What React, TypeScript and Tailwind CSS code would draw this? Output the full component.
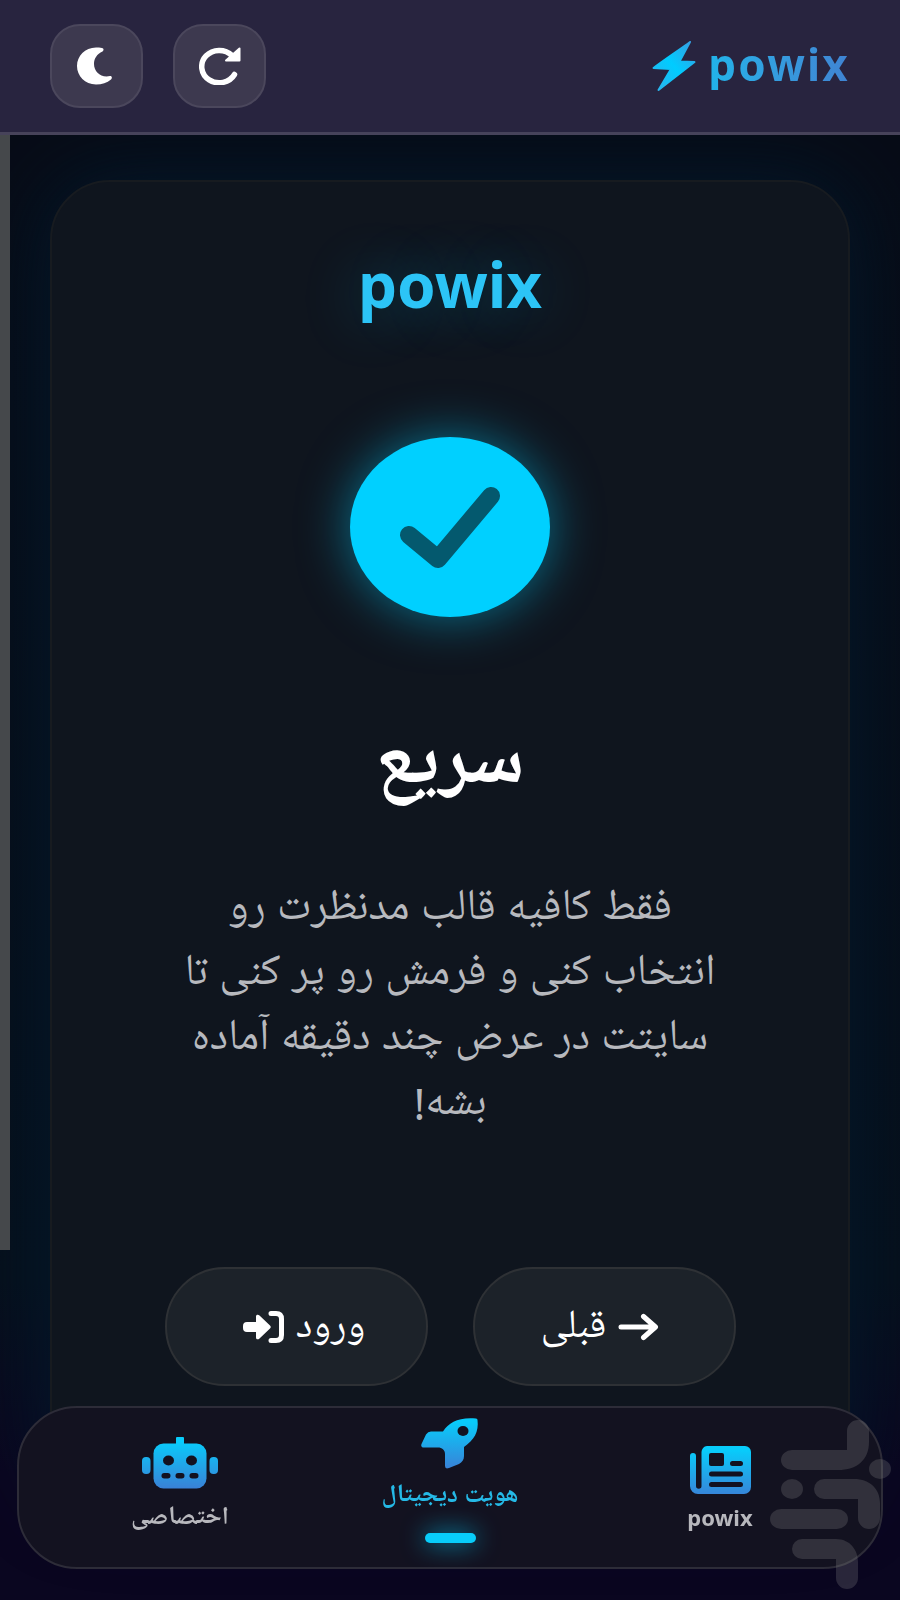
import { useState } from "react";

const tabs = [
  { id: "home", label: "powix", Icon: NewspaperIcon, text: "text-[22px]" },
  { id: "identity", label: "هویت دیجیتال", Icon: RocketIcon, text: "text-[25px]" },
  { id: "custom", label: "اختصاصی", Icon: RobotIcon, text: "text-[25px]" },
];

export default function App() {
  const [active, setActive] = useState("identity");

  return (
    <div
      dir="rtl"
      className="min-h-screen overflow-hidden bg-linear-to-b from-[#070c17] from-10% via-[#06101c] via-80% to-[#0a0620] to-92% font-['Noto_Sans','Noto_Naskh_Arabic_UI','Noto_Naskh_Arabic','DejaVu_Sans',sans-serif] text-white"
    >
      <header className="relative z-10 flex h-[135px] items-center justify-between border-b-3 border-[#47435a] bg-[#28243f] px-[50px]">
        <a href="#" dir="ltr" className="flex items-center gap-3">
          <BoltLogo />
          <span className="bg-linear-to-r from-[#20b4ea] to-[#3f83d2] bg-clip-text pb-1 text-[44px] font-bold leading-none tracking-wider text-transparent">
            powix
          </span>
        </a>
        <div className="flex gap-[30px]">
          <HeaderButton label="بارگذاری مجدد">
            <RedoIcon />
          </HeaderButton>
          <HeaderButton label="حالت شب">
            <MoonIcon />
          </HeaderButton>
        </div>
      </header>

      <main className="px-[50px] pt-[45px]">
        <section className="flex flex-col items-center rounded-[60px] border-2 border-[#171b20] bg-[#0f151e] px-[100px] pb-28 pt-[62px] shadow-[0_0_80px_#03192c]">
          <h1 className="text-[62px] font-bold leading-[80px] text-[#2cc4f6] [text-shadow:0_0_60px_rgba(0,210,255,0.3)]">
            powix
          </h1>

          <div className="mt-[113px] flex h-[180px] w-[200px] items-center justify-center rounded-[50%] bg-[#00d0ff] shadow-[0_0_50px_rgba(0,210,255,0.5)]">
            <svg viewBox="0 0 102 84" className="h-[84px] w-[102px]" fill="none" aria-hidden="true">
              <path
                d="M10 50 L39 74 L92 11"
                stroke="#04596e"
                strokeWidth="18"
                strokeLinecap="round"
                strokeLinejoin="round"
              />
            </svg>
          </div>

          <h2 className="mt-[106px] text-[78px] font-bold leading-[80px]">سریع</h2>

          <p className="mt-[73px] text-center text-[44px] leading-[65px] text-[#b7b9be]">
            فقط کافیه قالب مدنظرت رو
            <br />
            انتخاب کنی و فرمش رو پر کنی تا
            <br />
            سایتت در عرض چند دقیقه آماده
            <br />
            بشه!
          </p>

          <div className="mt-[131px] flex gap-[45px]">
            <PillButton className="pl-0 pr-2">
              <ArrowIcon />
              قبلی
            </PillButton>
            <PillButton className="pl-4 pr-0">
              ورود
              <LoginIcon />
            </PillButton>
          </div>
        </section>
      </main>

      {/* scroll indicator */}
      <div className="fixed bottom-[350px] left-0 top-[135px] w-[10px] bg-[#45484b]" />

      <nav className="fixed inset-x-[17px] bottom-[31px] z-10 flex h-[163px] rounded-[60px] border-2 border-[#2d2c38] bg-[#131220] px-[26px]">
        {tabs.map(({ id, label, Icon, text }) => {
          const isActive = id === active;
          return (
            <button
              key={id}
              type="button"
              onClick={() => setActive(id)}
              className={`flex flex-1 flex-col items-center ${isActive ? "pt-[7px]" : "pt-[29px]"}`}
            >
              <Icon />
              <span
                className={`mt-[6px] whitespace-nowrap font-bold leading-8 ${text} ${
                  isActive ? "text-[#25b9e6]" : "text-[#b8b8bd]"
                }`}
              >
                {label}
              </span>
              {isActive && (
                <span className="mt-[22px] h-[10px] w-[51px] rounded-full bg-[#08cdfa] shadow-[0_0_24px_rgba(0,210,255,0.8)]" />
              )}
            </button>
          );
        })}
      </nav>

      <Watermark />

      <svg width="0" height="0" className="absolute" aria-hidden="true">
        <defs>
          <linearGradient id="tab-gradient" gradientUnits="userSpaceOnUse" x1="0" y1="4" x2="0" y2="52">
            <stop offset="0" stopColor="#08ccfb" />
            <stop offset="1" stopColor="#3a80d6" />
          </linearGradient>
        </defs>
      </svg>
    </div>
  );
}

function HeaderButton({ label, children }: { label: string; children: React.ReactNode }) {
  return (
    <button
      type="button"
      aria-label={label}
      className="flex h-[84px] w-[93px] items-center justify-center rounded-[30px] border-2 border-[#4b475c] bg-[#3d394f]"
    >
      {children}
    </button>
  );
}

function PillButton({ className, children }: { className: string; children: React.ReactNode }) {
  return (
    <button
      type="button"
      className={`flex h-[119px] w-[263px] items-center justify-center gap-3 rounded-full border-2 border-[#2e3135] bg-[#1c2229] text-[40px] ${className}`}
    >
      {children}
    </button>
  );
}

function BoltLogo() {
  return (
    <svg viewBox="0 0 44 52" className="h-[52px] w-11" aria-hidden="true">
      <defs>
        <linearGradient id="bolt-gradient" x1="0" y1="1" x2="1" y2="0">
          <stop offset="0" stopColor="#2fb0ea" />
          <stop offset="0.5" stopColor="#00ccff" />
          <stop offset="1" stopColor="#3a9be0" />
        </linearGradient>
      </defs>
      <path
        d="M38 2C30 8 12 20 1.500 28L19 29L6.500 50L42.500 22L27.500 21.500Z"
        fill="url(#bolt-gradient)"
        stroke="url(#bolt-gradient)"
        strokeWidth="2"
        strokeLinejoin="round"
      />
    </svg>
  );
}

function MoonIcon() {
  return (
    <svg viewBox="0 0 41 38" className="h-[38px] w-[41px] fill-white" aria-hidden="true">
      <path d="M26 1C28 1.500 28 3.500 26.500 4.500C21 7 18 11.500 18 17C18 25 25 31 34 29C36 29 36.500 31 35 32.500C31 36 26 37.500 20 37.500C9 37.500 1 29 1 19C1 9 9 0.500 20 0.500C22 0.500 24 0.500 26 1Z" />
    </svg>
  );
}

function RedoIcon() {
  return (
    <svg viewBox="0 0 42 38" className="h-[38px] w-[42px]" fill="none" aria-hidden="true">
      <path d="M35.500 27.500A17.500 16.200 0 1 1 33 8.500" stroke="white" strokeWidth="5.500" strokeLinecap="round" />
      <path d="M40.500 1.500V13.500H27Z" fill="white" stroke="white" strokeWidth="2" strokeLinejoin="round" />
    </svg>
  );
}

function ArrowIcon() {
  return (
    <svg viewBox="0 0 41 28" className="h-7 w-[41px]" fill="none" aria-hidden="true">
      <path
        d="M3 14H36M25.500 3.500L37.500 14L25.500 24.500"
        stroke="white"
        strokeWidth="5"
        strokeLinecap="round"
        strokeLinejoin="round"
      />
    </svg>
  );
}

function LoginIcon() {
  return (
    <svg viewBox="0 0 41 32" className="h-8 w-[41px]" fill="none" aria-hidden="true">
      <path
        d="M4 11H13V5.500C13 3.500 15 3 16.500 4.500L27 14.500Q28.500 16 27 17.500L16.500 27.500C15 29 13 28.500 13 26.500V21H4Q0 21 0 17V15Q0 11 4 11Z"
        fill="white"
      />
      <path
        d="M28 2.500H33Q38.500 2.500 38.500 8V24Q38.500 29.500 33 29.500H28"
        stroke="white"
        strokeWidth="5"
        strokeLinecap="round"
      />
    </svg>
  );
}

function NewspaperIcon() {
  return (
    <svg viewBox="0 -9 61 58" className="h-[58px] w-[61px]" fill="none" aria-hidden="true">
      <path
        d="M17 0H55a6 6 0 0 1 6 6V41a7 7 0 0 1-7 7H8a8 8 0 0 1-8-8V10a3 3 0 0 1 6 0V40a2.750 2.750 0 0 0 5.500 0V6a6 6 0 0 1 5.500-6Z"
        fill="url(#tab-gradient)"
      />
      <rect x="19" y="7" width="15" height="13" rx="2" fill="#131220" />
      <path d="M42.500 17.500H50.500M21.500 28H50.500M21.500 38.500H50.500" stroke="#131220" strokeWidth="5" strokeLinecap="round" />
    </svg>
  );
}

function RocketIcon() {
  return (
    <svg viewBox="0 -3 58 58" className="size-[58px]" fill="none" aria-hidden="true">
      <path
        d="M22 13.500C28 4 38 -1 55 0.500Q56.500 0.500 56.500 2C58 14 53 22 43 29V38C43 42 41 44 38 46L28 50Q24 51.500 24 48V36C24 32 21 29.500 17 29.500H3C0 29.500 0 27.500 0.500 26L5 16.500Q7 13.500 10 13.500Z"
        fill="url(#tab-gradient)"
      />
      <ellipse cx="42" cy="13" rx="5.500" ry="5" fill="#131220" />
    </svg>
  );
}

function RobotIcon() {
  return (
    <svg viewBox="0 0 76 58" className="h-[58px] w-[76px]" aria-hidden="true">
      <g fill="url(#tab-gradient)">
        <rect y="20" width="8.500" height="17" rx="4" />
        <rect x="67.500" y="20" width="8.500" height="17" rx="4" />
        <rect x="34" width="8" height="10" rx="1" />
        <rect x="11.500" y="6.500" width="53" height="45" rx="10" />
      </g>
      <g fill="#131220">
        <ellipse cx="26.500" cy="23.500" rx="5.500" ry="5" />
        <ellipse cx="49.500" cy="23.500" rx="5.500" ry="5" />
        <rect x="19.500" y="36" width="9" height="5.500" rx="2.700" />
        <rect x="33.500" y="36" width="9" height="5.500" rx="2.700" />
        <rect x="47.500" y="36" width="9" height="5.500" rx="2.700" />
      </g>
    </svg>
  );
}

function Watermark() {
  return (
    <svg
      viewBox="30 20 122 170"
      className="pointer-events-none fixed bottom-[10px] right-2 z-20 h-[170px] w-[122px] fill-[#8a8a8a] opacity-25"
      aria-hidden="true"
    >
      <path d="M52 50H107V31a11 11 0 0 1 22 0V42C129 60 117 70 98 70H52a11 10 0 0 1 0-20Z" />
      <ellipse cx="140" cy="69" rx="11" ry="10" />
      <ellipse cx="52" cy="89" rx="11" ry="10" />
      <path d="M84 79H114C130 79 140 89 140 103V118a11 11 0 0 1-22 0V99H84a10 10 0 0 1 0-20Z" />
      <rect x="30" y="109" width="78" height="20" rx="11" ry="10" />
      <path d="M62 139H96C110 139 118 150 118 162V178a11 11 0 0 1-22 0V159H62a10 10 0 0 1 0-20Z" />
    </svg>
  );
}
